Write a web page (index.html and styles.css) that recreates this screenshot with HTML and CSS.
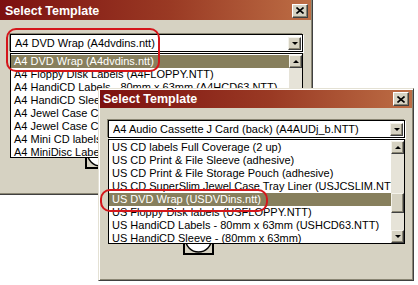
FILE: index.html
```html
<!DOCTYPE html>
<html lang="en">
<head>
  <meta charset="UTF-8" />
  <title>Select Template</title>
  <link rel="stylesheet" href="styles.css">
</head>
<body>
  <div class="desktop">

    <!-- back dialog -->
    <div class="window win-back">
      <div class="titlebar">
        <span class="title">Select Template</span>
        <span class="close"><svg width="8" height="7" viewBox="0 0 8 7"><path d="M0.5 0.5 L7.5 6.5 M7.5 0.5 L0.5 6.5" stroke="#000" stroke-width="1.6"/></svg></span>
      </div>
      <div class="body">
        <div class="combo">
          <span class="combo-text">A4 DVD Wrap (A4dvdins.ntt)</span>
          <span class="btn"><i class="tri-down"></i></span>
        </div>
        <div class="list">
          <ul class="rows">
            <li class="selected">A4 DVD Wrap (A4dvdins.ntt)</li>
            <li>A4 Floppy Disk Labels (A4FLOPPY.NTT)</li>
            <li>A4 HandiCD Labels - 80mm x 63mm (A4HCD63.NTT)</li>
            <li>A4 HandiCD Sleeve - (80mm x 63mm)</li>
            <li>A4 Jewel Case Cover (A4JCOVER.NTT)</li>
            <li>A4 Jewel Case Cover - Tray Liner</li>
            <li>A4 Mini CD labels (A4MINICD.NTT)</li>
            <li>A4 MiniDisc Labels (A4MD.NTT)</li>
          </ul>
          <div class="scrollbar">
            <span class="btn"><i class="tri-up"></i></span>
            <span class="track"><span class="thumb"></span></span>
            <span class="btn"><i class="tri-down"></i></span>
          </div>
        </div>
        <div class="preview">
          <svg width="31" height="11" viewBox="0 0 31 11"><rect x="1" y="-4" width="29" height="14" fill="#d6d2c2" stroke="#000" stroke-width="2"/><circle cx="15.5" cy="-5" r="13" fill="#fff" stroke="#000" stroke-width="1.5"/></svg>
        </div>
      </div>
    </div>

    <div class="annot annot-back"></div>

    <!-- front dialog -->
    <div class="window win-front">
      <div class="titlebar">
        <span class="title">Select Template</span>
        <span class="close"><svg width="8" height="7" viewBox="0 0 8 7"><path d="M0.5 0.5 L7.5 6.5 M7.5 0.5 L0.5 6.5" stroke="#000" stroke-width="1.6"/></svg></span>
      </div>
      <div class="body">
        <div class="combo">
          <span class="combo-text">A4 Audio Cassette J Card (back) (A4AUDj_b.NTT)</span>
          <span class="btn"><i class="tri-down"></i></span>
        </div>
        <div class="list">
          <ul class="rows">
            <li>US CD labels Full Coverage (2 up)</li>
            <li>US CD Print &amp; File Sleeve (adhesive)</li>
            <li>US CD Print &amp; File Storage Pouch (adhesive)</li>
            <li>US CD SuperSlim Jewel Case Tray Liner (USJCSLIM.NTT)</li>
            <li class="selected">US DVD Wrap (USDVDins.ntt)</li>
            <li>US Floppy Disk labels (USFLOPPY.NTT)</li>
            <li>US HandiCD Labels - 80mm x 63mm (USHCD63.NTT)</li>
            <li>US HandiCD Sleeve - (80mm x 63mm)</li>
          </ul>
          <div class="scrollbar">
            <span class="btn"><i class="tri-up"></i></span>
            <span class="track"><span class="thumb"></span></span>
            <span class="btn"><i class="tri-down"></i></span>
          </div>
        </div>
        <div class="preview">
          <svg width="31" height="11" viewBox="0 0 31 11"><rect x="1" y="-4" width="29" height="14" fill="#d6d2c2" stroke="#000" stroke-width="2"/><circle cx="15.5" cy="-5" r="13" fill="#fff" stroke="#000" stroke-width="1.5"/></svg>
        </div>
      </div>
    </div>

    <div class="annot annot-front"></div>
  </div>
</body>
</html>
```

FILE: styles.css
```css
body {
  margin: 0;
  background: #fff;
}

.desktop {
  position: relative;
  width: 418px;
  height: 285px;
  overflow: hidden;
  background: #fff;
  font-family: "Liberation Sans", Arial, sans-serif;
  font-size: 11px;
}

/* windows sit on the desktop at their own places */
.window {
  position: absolute;
  box-sizing: border-box;
  display: flex;
  flex-direction: column;
  background: #d6d2c2;
  border: 1px solid;
  border-color: #e4e1d4 #404040 #404040 #e4e1d4;
  box-shadow: inset 1px 1px #fff, inset -1px -1px #8a8674;
  padding: 1px;
}
.win-back {
  left: -2px;
  top: -2px;
  width: 315px;
  height: 197px;
}
.win-front {
  left: 98px;
  top: 88px;
  width: 316px;
  height: 193px;
}

.titlebar {
  height: 18px;
  flex: none;
  display: flex;
  align-items: center;
  justify-content: space-between;
  padding: 0 3px 0 3px;
  background: linear-gradient(to right, #7c1010, #9a3a24 55%, #bd6e45);
}
.win-back .titlebar {
  height: 19px;
  padding: 1px 3px 0 5px;
}
.title {
  color: #fff;
  font-weight: bold;
  font-size: 12.5px;
}
.close {
  width: 16px;
  height: 14px;
  box-sizing: border-box;
  display: flex;
  align-items: center;
  justify-content: center;
  background: #d6d2c2;
  border: 1px solid;
  border-color: #fff #404040 #404040 #fff;
  box-shadow: inset -1px -1px #8a8674;
}

.body {
  display: flex;
  flex-direction: column;
  padding: 12px 7px 0 8px;
}
.win-back .body {
  padding: 14px 8px 0 10px;
}

.combo {
  height: 18px;
  box-sizing: border-box;
  display: flex;
  align-items: center;
  background: #fff;
  border: 1px solid #000;
  box-shadow: -1px -1px #8a8674, 1px 1px #fff;
  padding: 0 0 0 4px;
}
.combo-text {
  flex: 1;
  white-space: nowrap;
  overflow: hidden;
}

.btn {
  width: 13px;
  height: 13px;
  flex: none;
  box-sizing: border-box;
  display: flex;
  align-items: center;
  justify-content: center;
  background: #d6d2c2;
  border: 1px solid;
  border-color: #f4f2ea #404040 #404040 #f4f2ea;
  box-shadow: inset -1px -1px #8a8674;
}
.combo .btn {
  margin-right: 1px;
}
.tri-down,
.tri-up {
  width: 0;
  height: 0;
  border-left: 3px solid transparent;
  border-right: 3px solid transparent;
}
.tri-down {
  border-top: 3px solid #000;
}
.tri-up {
  border-bottom: 3px solid #000;
}

.list {
  margin-top: 1px;
  height: 105px;
  box-sizing: border-box;
  display: flex;
  background: #fff;
  border: 1px solid #000;
  padding-top: 1px;
}
.rows {
  flex: 1;
  margin: 0;
  padding: 0;
  list-style: none;
  overflow: hidden;
}
.rows li {
  height: 13px;
  line-height: 13px;
  padding-left: 3px;
  white-space: nowrap;
  color: #000;
}
.rows li.selected {
  background: #877f5d;
  color: #fff;
}

.scrollbar {
  width: 13px;
  display: flex;
  flex-direction: column;
  background: #e6e3d8;
}
.track {
  flex: 1;
  position: relative;
}
.thumb {
  position: absolute;
  left: 0;
  right: 0;
  top: 39px;
  height: 20px;
  box-sizing: border-box;
  background: #d6d2c2;
  border: 1px solid;
  border-color: #f4f2ea #404040 #404040 #f4f2ea;
  box-shadow: inset -1px -1px #8a8674;
}

.preview {
  margin-left: 75px;
  height: 11px;
  line-height: 0;
}

/* red hand-drawn highlight rings */
.annot {
  position: absolute;
  border: 2px solid #d4161b;
  border-radius: 10px;
}
.annot-back {
  left: 6px;
  top: 28px;
  width: 150px;
  height: 40px;
}
.annot-front {
  left: 100px;
  top: 189px;
  width: 164px;
  height: 19px;
}
```
